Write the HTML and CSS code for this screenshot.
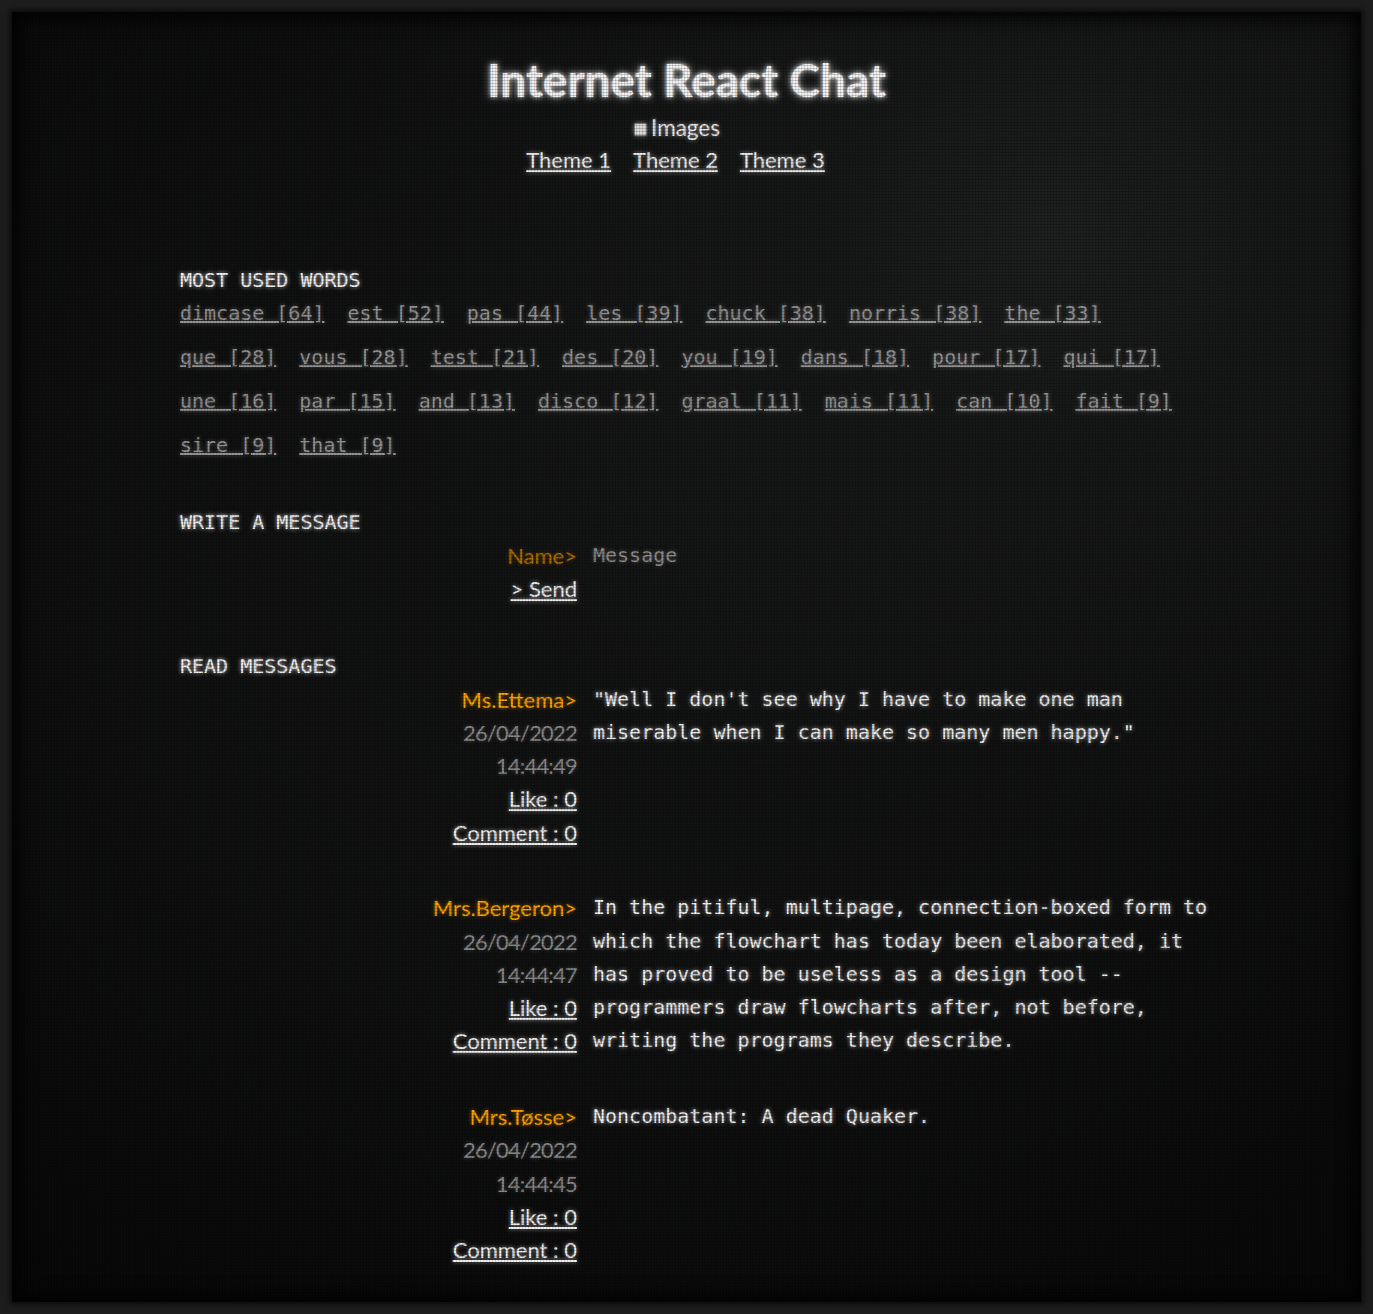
FILE: index.html
```html
<!DOCTYPE html>
<html lang="en">
<head>
<meta charset="utf-8">
<title>Internet React Chat</title>
<link rel="stylesheet" href="styles.css">
</head>
<body>
<div class="screen">
  <header class="top">
    <h1 class="title">Internet React Chat</h1>
    <label class="images"><span class="box"></span>Images</label>
    <nav class="themes">
      <a href="#">Theme 1</a>
      <a href="#">Theme 2</a>
      <a href="#">Theme 3</a>
    </nav>
  </header>

  <main class="content">
    <section class="section">
      <h2 class="heading">MOST USED WORDS</h2>
      <div class="word-list">
        <a href="#">dimcase [64]</a>
        <a href="#">est [52]</a>
        <a href="#">pas [44]</a>
        <a href="#">les [39]</a>
        <a href="#">chuck [38]</a>
        <a href="#">norris [38]</a>
        <a href="#">the [33]</a>
        <a href="#">que [28]</a>
        <a href="#">vous [28]</a>
        <a href="#">test [21]</a>
        <a href="#">des [20]</a>
        <a href="#">you [19]</a>
        <a href="#">dans [18]</a>
        <a href="#">pour [17]</a>
        <a href="#">qui [17]</a>
        <a href="#">une [16]</a>
        <a href="#">par [15]</a>
        <a href="#">and [13]</a>
        <a href="#">disco [12]</a>
        <a href="#">graal [11]</a>
        <a href="#">mais [11]</a>
        <a href="#">can [10]</a>
        <a href="#">fait [9]</a>
        <a href="#">sire [9]</a>
        <a href="#">that [9]</a>
      </div>
    </section>

    <section class="section">
      <h2 class="heading">WRITE A MESSAGE</h2>
      <div class="msg">
        <div class="meta">
          <span class="name-input">Name&gt;</span>
          <a href="#" class="link">&gt; Send</a>
        </div>
        <div class="body placeholder">Message</div>
      </div>
    </section>

    <section class="section">
      <h2 class="heading">READ MESSAGES</h2>
      <div class="msg">
        <div class="meta">
          <span class="author">Ms.Ettema&gt;</span>
          <span class="stamp">26/04/2022</span>
          <span class="stamp">14:44:49</span>
          <a href="#" class="link">Like : 0</a>
          <a href="#" class="link">Comment : 0</a>
        </div>
        <div class="body">"Well I don't see why I have to make one man miserable when I can make so many men happy."</div>
      </div>
      <div class="msg">
        <div class="meta">
          <span class="author">Mrs.Bergeron&gt;</span>
          <span class="stamp">26/04/2022</span>
          <span class="stamp">14:44:47</span>
          <a href="#" class="link">Like : 0</a>
          <a href="#" class="link">Comment : 0</a>
        </div>
        <div class="body">In the pitiful, multipage, connection-boxed form to which the flowchart has today been elaborated, it has proved to be useless as a design tool -- programmers draw flowcharts after, not before, writing the programs they describe.</div>
      </div>
      <div class="msg">
        <div class="meta">
          <span class="author">Mrs.Tøsse&gt;</span>
          <span class="stamp">26/04/2022</span>
          <span class="stamp">14:44:45</span>
          <a href="#" class="link">Like : 0</a>
          <a href="#" class="link">Comment : 0</a>
        </div>
        <div class="body">Noncombatant: A dead Quaker.</div>
      </div>
    </section>
  </main>
</div>
</body>
</html>
```

FILE: styles.css
```css
* { box-sizing: border-box; }

html, body {
  margin: 0;
  padding: 0;
  height: 100%;
}

body {
  background: #1d1d1d;
  padding: 12px;
  font-family: Lato, "Noto Sans", sans-serif;
  color: #eeeeee;
}

.screen {
  position: relative;
  min-height: 100%;
  padding: 40px 0 30px 168px;
  background:
    radial-gradient(ellipse 700px 600px at 77% 17%, #1d1f1f 0%, #161818 30%, rgba(17,19,19,0) 100%),
    radial-gradient(ellipse 1100px 1000px at 50% 40%, #121414 0%, #0e0f0f 55%, #060606 100%);
  box-shadow: inset 0 0 18px 6px #000, 0 0 6px 2px rgba(0,0,0,.7);
}

.screen::after {
  content: "";
  position: absolute;
  inset: 0;
  pointer-events: none;
  background:
    repeating-linear-gradient(0deg, rgba(0,0,0,.18) 0 1px, transparent 1px 3px),
    repeating-linear-gradient(90deg, rgba(0,0,0,.14) 0 1px, rgba(120,30,30,.03) 1px 2px, transparent 2px 3px);
}

a { color: inherit; }

/* header */
.top {
  display: flex;
  flex-direction: column;
  align-items: center;
  margin-left: -168px;
}

.title {
  margin: 0;
  font-family: Lato, "Noto Sans", sans-serif;
  font-weight: 700;
  font-size: 46px;
  line-height: 56px;
  color: #f4f4f4;
  text-shadow: 0 0 4px rgba(255,255,255,.9), 0 0 10px rgba(255,255,255,.55);
}

.images {
  display: flex;
  align-items: center;
  gap: 4px;
  margin-top: 4px;
  margin-right: 19px;
  font-size: 22.5px;
  line-height: 32px;
  color: #f0f0f0;
  text-shadow: 0 0 4px rgba(255,255,255,.6);
}

.box {
  width: 13px;
  height: 13px;
  margin-top: 3px;
  border: 1px solid #7a7a88;
  border-radius: 2px;
  background: #dcdcdc;
  box-shadow: 0 0 4px rgba(255,255,255,.5);
}

.themes {
  display: flex;
  gap: 22px;
  margin-right: 22px;
  font-size: 22px;
  line-height: 32px;
  text-shadow: 0 0 4px rgba(255,255,255,.6);
}

.themes a { color: #f0f0f0; }

/* content */
.content {
  width: 1033px;
  margin-top: 88px;
}

.section + .section { margin-top: 44px; }

.heading {
  margin: 0;
  font-family: "DejaVu Sans Mono", "Liberation Mono", monospace;
  font-weight: 400;
  font-size: 20px;
  line-height: 33px;
  color: #f4f4f4;
  text-shadow: 0 0 4px rgba(255,255,255,.8);
}

.word-list {
  display: flex;
  flex-wrap: wrap;
  column-gap: 23px;
  row-gap: 11px;
  font-family: "DejaVu Sans Mono", "Liberation Mono", monospace;
  font-size: 20px;
  line-height: 33px;
}

.word-list a {
  color: #959595;
  text-shadow: 0 0 4px rgba(160,160,160,.55);
}

.msg {
  display: grid;
  grid-template-columns: 397px 1fr;
  column-gap: 16px;
}

.msg + .msg { margin-top: 42.5px; }

.meta {
  display: flex;
  flex-direction: column;
  align-items: flex-end;
  font-size: 22px;
  line-height: 33.25px;
}

.author {
  color: #ffa500;
  text-shadow: 0 0 4px rgba(255,165,0,.55);
}

.name-input {
  color: #b07000;
  text-shadow: 0 0 4px rgba(180,115,0,.45);
}

.stamp {
  color: #8a8a8a;
  letter-spacing: -0.8px;
  text-shadow: 0 0 4px rgba(140,140,140,.45);
}

.link {
  color: #f0f0f0;
  text-shadow: 0 0 4px rgba(255,255,255,.6);
}

.body {
  font-family: "DejaVu Sans Mono", "Liberation Mono", monospace;
  font-size: 20px;
  line-height: 33.25px;
  color: #f2f2f2;
  text-shadow: 0 0 4px rgba(255,255,255,.65);
}

.placeholder {
  color: #8e8e8e;
  text-shadow: 0 0 4px rgba(150,150,150,.5);
}
```
